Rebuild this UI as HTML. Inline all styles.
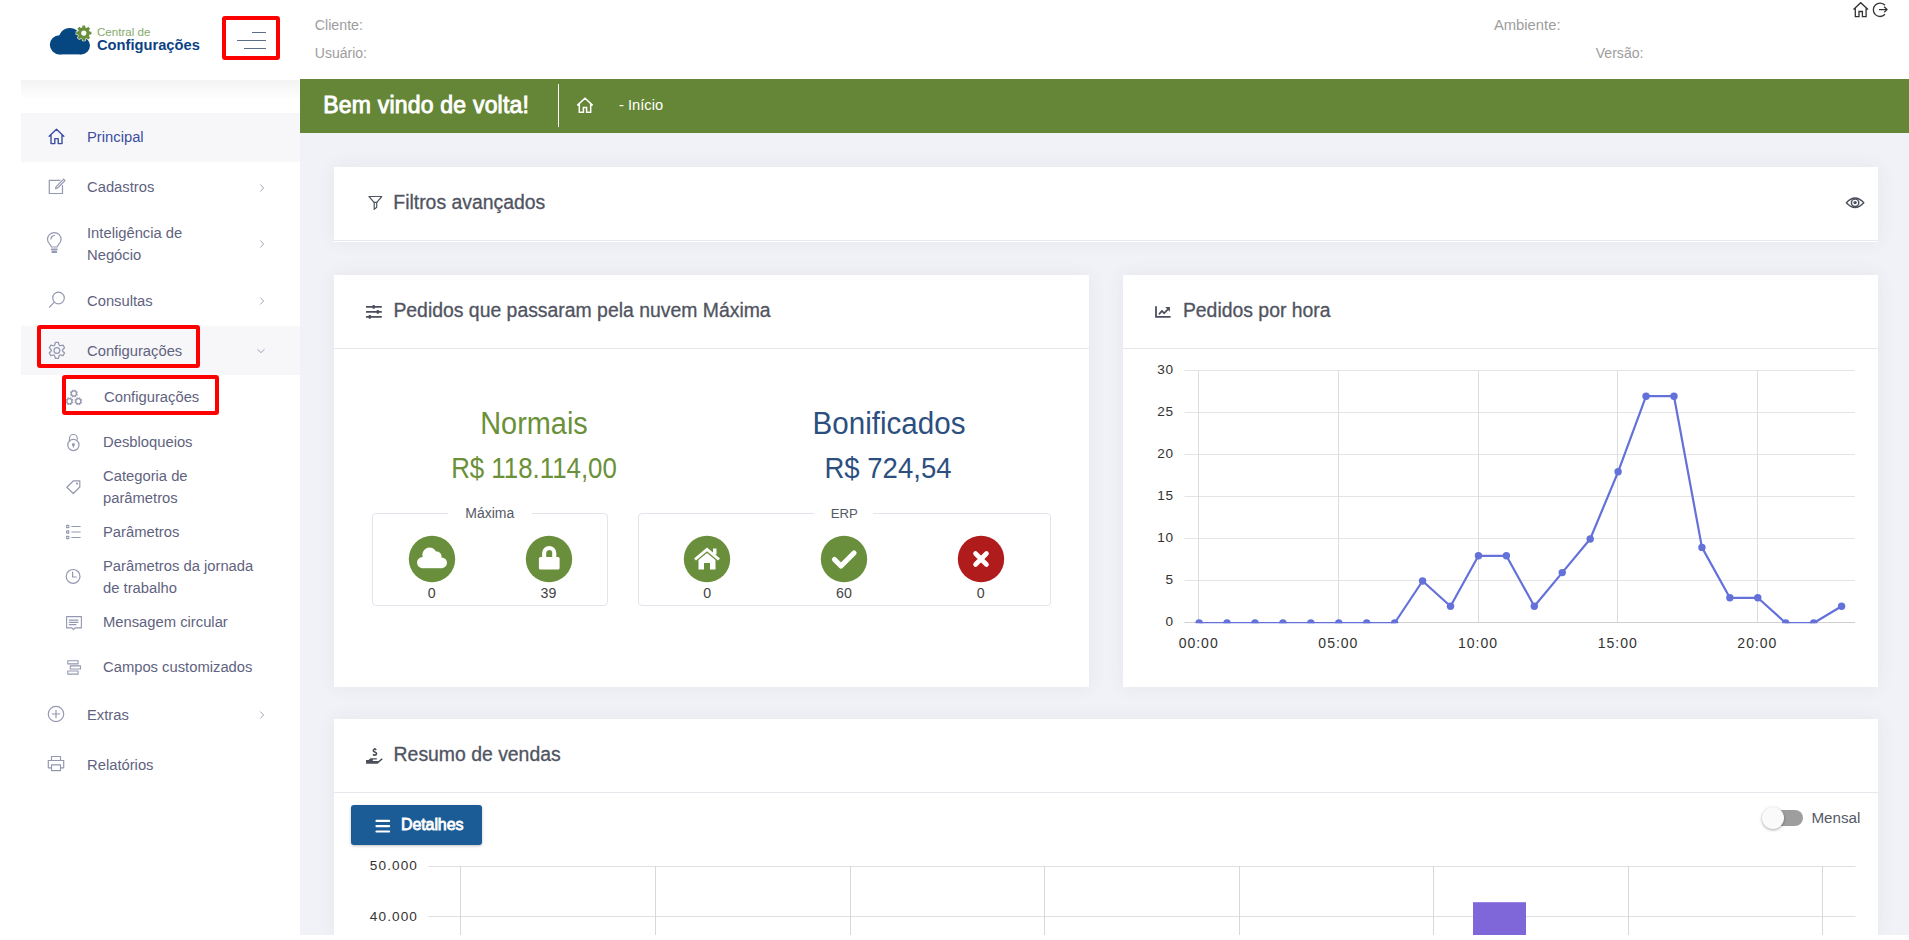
<!DOCTYPE html><html><head><meta charset="utf-8"><style>
*{margin:0;padding:0;box-sizing:border-box}
html,body{width:1909px;height:940px;overflow:hidden;background:#fff;font-family:"Liberation Sans",sans-serif}
.t{position:absolute;white-space:nowrap}
.abs{position:absolute}
.card{position:absolute;background:#fff;box-shadow:0 0 18px rgba(60,64,100,0.07)}
.hb{position:absolute;left:0;right:0;height:1px;background:#e6e8ee}
svg{position:absolute;overflow:visible}
</style></head><body>
<div class="abs" style="left:300px;top:79px;width:1609px;height:856px;background:#f1f2f7"></div>
<div class="abs" style="left:21px;top:80px;width:279px;height:20px;background:linear-gradient(#f3f3f4,#fff)"></div>
<div class="abs" style="left:21px;top:113px;width:279px;height:49px;background:#f7f7fa"></div>
<div class="abs" style="left:21px;top:326px;width:279px;height:49px;background:#f7f7fa"></div>
<div class="t" style="top:17.88px;font-size:14.2px;line-height:14.2px;color:#9d9d9d;left:314.80px;">Cliente:</div>
<div class="t" style="top:46.05px;font-size:14.0px;line-height:14.0px;color:#9d9d9d;left:314.80px;">Usuário:</div>
<div class="t" style="top:18.07px;font-size:14.8px;line-height:14.8px;color:#9d9d9d;left:1493.90px;">Ambiente:</div>
<div class="t" style="top:46.06px;font-size:14.1px;line-height:14.1px;color:#9d9d9d;left:1595.70px;">Versão:</div>
<svg style="left:0;top:0" width="210" height="70" viewBox="0 0 210 70">
<g fill="#064781"><circle cx="59.4" cy="44.8" r="9.6"/><circle cx="69.8" cy="38.8" r="10.9"/><circle cx="81.2" cy="45.6" r="8.8"/><rect x="59.4" y="40" width="21.8" height="14.4"/></g>
<path d="M82.28,27.40 L82.50,25.51 L85.10,25.51 L85.32,27.40 L86.76,28.00 L88.25,26.81 L90.09,28.65 L88.90,30.14 L89.50,31.58 L91.39,31.80 L91.39,34.40 L89.50,34.62 L88.90,36.06 L90.09,37.55 L88.25,39.39 L86.76,38.20 L85.32,38.80 L85.10,40.69 L82.50,40.69 L82.28,38.80 L80.84,38.20 L79.35,39.39 L77.51,37.55 L78.70,36.06 L78.10,34.62 L76.21,34.40 L76.21,31.80 L78.10,31.58 L78.70,30.14 L77.51,28.65 L79.35,26.81 L80.84,28.00 Z" fill="#6a8f3b" stroke="#fff" stroke-width="1.1" paint-order="stroke" stroke-linejoin="round"/>
<circle cx="83.8" cy="33.1" r="2.6" fill="#fff"/>
</svg>
<div class="t" style="top:26.08px;font-size:11.6px;line-height:11.6px;color:#86a96a;left:97.00px;">Central de</div>
<div class="t" style="top:38.16px;font-size:14.7px;line-height:14.7px;color:#0c4283;font-weight:700;left:97.00px;">Configurações</div>
<div class="abs" style="left:221.5px;top:15.5px;width:58px;height:44px;border:4px solid #ff0000;border-radius:3px"></div>
<div class="abs" style="left:252px;top:31.7px;width:14px;height:1.5px;background:#5a6e88"></div>
<div class="abs" style="left:237px;top:39.7px;width:29px;height:1.5px;background:#5a6e88"></div>
<div class="abs" style="left:244px;top:47.7px;width:22px;height:1.5px;background:#5a6e88"></div>
<svg style="left:1850px;top:0" width="45" height="22" viewBox="0 0 45 22">
<path d="M3.5,9.5 L10.7,2.7 L18,9.5 M5.3,8 V16.6 H9 V11.5 H12.4 V16.6 H16.1 V8" fill="none" stroke="#333" stroke-width="1.3" stroke-linejoin="miter"/>
<path d="M35,5.3 A6.7,6.7 0 1 0 35,14.3" fill="none" stroke="#333" stroke-width="1.3"/>
<path d="M29,9.6 H37 M34.2,6.8 L37,9.6 L34.2,12.4" fill="none" stroke="#333" stroke-width="1.3"/>
</svg>
<div class="abs" style="left:300px;top:79px;width:1609px;height:54px;background:#658636"></div>
<div class="t" style="top:93.83px;font-size:23px;line-height:23px;color:#fff;letter-spacing:0.2px;left:323.30px;-webkit-text-stroke:0.9px #fff;">Bem vindo de volta!</div>
<div class="abs" style="left:558px;top:84px;width:1px;height:43px;background:#fff"></div>
<svg style="left:575px;top:96px" width="20" height="20" viewBox="0 0 20 20">
<path d="M2.3,9.4 L10,2.3 L17.7,9.4 M4.3,7.8 V16.3 H8.4 V11.6 H11.6 V16.3 H15.7 V7.8" fill="none" stroke="#fff" stroke-width="1.5" stroke-linejoin="miter"/>
</svg>
<div class="t" style="top:98.16px;font-size:14.7px;line-height:14.7px;color:#fff;left:619.00px;">- Início</div>
<div class="t" style="top:129.18px;font-size:15.5px;line-height:15.5px;color:#3c4d9f;left:87.00px;transform:scaleX(0.953);transform-origin:left 50%;">Principal</div>
<div class="t" style="top:179.08px;font-size:15.5px;line-height:15.5px;color:#5f6380;left:87.00px;transform:scaleX(0.953);transform-origin:left 50%;">Cadastros</div>
<div class="t" style="top:225.18px;font-size:15.5px;line-height:15.5px;color:#5f6380;left:87.00px;transform:scaleX(0.953);transform-origin:left 50%;">Inteligência de</div>
<div class="t" style="top:246.88px;font-size:15.5px;line-height:15.5px;color:#5f6380;left:87.00px;transform:scaleX(0.953);transform-origin:left 50%;">Negócio</div>
<div class="t" style="top:292.78px;font-size:15.5px;line-height:15.5px;color:#5f6380;left:87.00px;transform:scaleX(0.953);transform-origin:left 50%;">Consultas</div>
<div class="t" style="top:342.58px;font-size:15.5px;line-height:15.5px;color:#5f6380;left:87.00px;transform:scaleX(0.953);transform-origin:left 50%;">Configurações</div>
<div class="t" style="top:388.58px;font-size:15.5px;line-height:15.5px;color:#5f6380;left:103.50px;transform:scaleX(0.953);transform-origin:left 50%;">Configurações</div>
<div class="t" style="top:434.08px;font-size:15.5px;line-height:15.5px;color:#5f6380;left:103.20px;transform:scaleX(0.953);transform-origin:left 50%;">Desbloqueios</div>
<div class="t" style="top:468.48px;font-size:15.5px;line-height:15.5px;color:#5f6380;left:103.20px;transform:scaleX(0.953);transform-origin:left 50%;">Categoria de</div>
<div class="t" style="top:489.58px;font-size:15.5px;line-height:15.5px;color:#5f6380;left:103.20px;transform:scaleX(0.953);transform-origin:left 50%;">parâmetros</div>
<div class="t" style="top:524.08px;font-size:15.5px;line-height:15.5px;color:#5f6380;left:103.20px;transform:scaleX(0.953);transform-origin:left 50%;">Parâmetros</div>
<div class="t" style="top:558.18px;font-size:15.5px;line-height:15.5px;color:#5f6380;left:103.20px;transform:scaleX(0.953);transform-origin:left 50%;">Parâmetros da jornada</div>
<div class="t" style="top:579.68px;font-size:15.5px;line-height:15.5px;color:#5f6380;left:103.20px;transform:scaleX(0.953);transform-origin:left 50%;">de trabalho</div>
<div class="t" style="top:613.58px;font-size:15.5px;line-height:15.5px;color:#5f6380;left:103.20px;transform:scaleX(0.953);transform-origin:left 50%;">Mensagem circular</div>
<div class="t" style="top:658.68px;font-size:15.5px;line-height:15.5px;color:#5f6380;left:103.20px;transform:scaleX(0.953);transform-origin:left 50%;">Campos customizados</div>
<div class="t" style="top:706.58px;font-size:15.5px;line-height:15.5px;color:#5f6380;left:87.00px;transform:scaleX(0.953);transform-origin:left 50%;">Extras</div>
<div class="t" style="top:756.68px;font-size:15.5px;line-height:15.5px;color:#5f6380;left:87.00px;transform:scaleX(0.953);transform-origin:left 50%;">Relatórios</div>
<svg style="left:258px;top:182.5px" width="8" height="10" viewBox="0 0 8 10"><path d="M2.3,1.5 L5.6,5 L2.3,8.5" fill="none" stroke="#a0a4b8" stroke-width="1"/></svg>
<svg style="left:258px;top:239px" width="8" height="10" viewBox="0 0 8 10"><path d="M2.3,1.5 L5.6,5 L2.3,8.5" fill="none" stroke="#a0a4b8" stroke-width="1"/></svg>
<svg style="left:258px;top:296px" width="8" height="10" viewBox="0 0 8 10"><path d="M2.3,1.5 L5.6,5 L2.3,8.5" fill="none" stroke="#a0a4b8" stroke-width="1"/></svg>
<svg style="left:258px;top:710px" width="8" height="10" viewBox="0 0 8 10"><path d="M2.3,1.5 L5.6,5 L2.3,8.5" fill="none" stroke="#a0a4b8" stroke-width="1"/></svg>
<svg style="left:256px;top:346px" width="10" height="10" viewBox="0 0 10 10"><path d="M1.5,3.3 L5,6.6 L8.5,3.3" fill="none" stroke="#a0a4b8" stroke-width="1"/></svg>
<svg style="left:48px;top:128px" width="18" height="17" viewBox="0 0 18 17"><g fill="none" stroke="#3c4d9f" stroke-width="1.4" stroke-linecap="round" stroke-linejoin="round"><path d="M1.2,8.2 L8.5,1.2 L15.8,8.2 M3,6.8 V15.6 H6.8 V10.6 H10.2 V15.6 H14 V6.8"/></g></svg>
<svg style="left:48px;top:178px" width="18" height="17" viewBox="0 0 18 17"><g fill="none" stroke="#9498b0" stroke-width="1.2" stroke-linecap="round" stroke-linejoin="round"><path d="M12,2.3 H1.3 V15.5 H14.5 V7.5"/><path d="M15.6,1.2 L8.2,8.6 L7.5,10.7 L9.6,10 L17,2.6 Z"/></g></svg>
<svg style="left:46px;top:232px" width="18" height="23" viewBox="0 0 18 23"><g fill="none" stroke="#9498b0" stroke-width="1.2" stroke-linecap="round" stroke-linejoin="round"><path d="M5.5,15 C4.8,12.5 1.5,11 1.5,7.5 A6.8,6.8 0 0 1 15.1,7.5 C15.1,11 11.8,12.5 11.1,15 Z"/><path d="M5.8,17.5 H10.8 M6.3,20 H10.3" stroke-width="1.8"/><path d="M5,7 A3.5,3.5 0 0 1 8.5,3.5"/></g></svg>
<svg style="left:48px;top:291px" width="18" height="18" viewBox="0 0 18 18"><g fill="none" stroke="#9498b0" stroke-width="1.2" stroke-linecap="round" stroke-linejoin="round"><circle cx="10.5" cy="7" r="5.8"/><path d="M6.4,11.2 L1.5,16.2"/></g></svg>
<svg style="left:44px;top:338px" width="26" height="24" viewBox="0 0 26 24"><g fill="none" stroke="#9498b0" stroke-width="1.25" stroke-linecap="round" stroke-linejoin="round"><path d="M10.88,6.54 L11.35,4.45 L14.45,4.45 L14.92,6.54 L15.65,7.64 L16.97,7.72 L19.01,7.09 L20.56,9.76 L18.99,11.22 L18.40,12.40 L18.99,13.58 L20.56,15.04 L19.01,17.71 L16.97,17.08 L15.65,17.16 L14.92,18.26 L14.45,20.35 L11.35,20.35 L10.88,18.26 L10.15,17.16 L8.83,17.08 L6.79,17.71 L5.24,15.04 L6.81,13.58 L7.40,12.40 L6.81,11.22 L5.24,9.76 L6.79,7.09 L8.83,7.72 L10.15,7.64 Z"/><circle cx="12.9" cy="12.4" r="2.9"/></g></svg>
<svg style="left:62px;top:386px" width="24" height="24" viewBox="0 0 24 24"><g fill="none" stroke="#9498b0" stroke-width="1.2" stroke-linecap="round" stroke-linejoin="round"><circle cx="11.9" cy="7.5" r="2.55" stroke-width="1.25"/><path d="M14.67,8.65 L15.55,9.01" stroke-width="1.5" stroke-linecap="butt"/><path d="M13.05,10.27 L13.41,11.15" stroke-width="1.5" stroke-linecap="butt"/><path d="M10.75,10.27 L10.39,11.15" stroke-width="1.5" stroke-linecap="butt"/><path d="M9.13,8.65 L8.25,9.01" stroke-width="1.5" stroke-linecap="butt"/><path d="M9.13,6.35 L8.25,5.99" stroke-width="1.5" stroke-linecap="butt"/><path d="M10.75,4.73 L10.39,3.85" stroke-width="1.5" stroke-linecap="butt"/><path d="M13.05,4.73 L13.41,3.85" stroke-width="1.5" stroke-linecap="butt"/><path d="M14.67,6.35 L15.55,5.99" stroke-width="1.5" stroke-linecap="butt"/><circle cx="7.4" cy="15.2" r="2.55" stroke-width="1.25"/><path d="M10.17,16.35 L11.05,16.71" stroke-width="1.5" stroke-linecap="butt"/><path d="M8.55,17.97 L8.91,18.85" stroke-width="1.5" stroke-linecap="butt"/><path d="M6.25,17.97 L5.89,18.85" stroke-width="1.5" stroke-linecap="butt"/><path d="M4.63,16.35 L3.75,16.71" stroke-width="1.5" stroke-linecap="butt"/><path d="M4.63,14.05 L3.75,13.69" stroke-width="1.5" stroke-linecap="butt"/><path d="M6.25,12.43 L5.89,11.55" stroke-width="1.5" stroke-linecap="butt"/><path d="M8.55,12.43 L8.91,11.55" stroke-width="1.5" stroke-linecap="butt"/><path d="M10.17,14.05 L11.05,13.69" stroke-width="1.5" stroke-linecap="butt"/><circle cx="16.3" cy="15.2" r="2.55" stroke-width="1.25"/><path d="M19.07,16.35 L19.95,16.71" stroke-width="1.5" stroke-linecap="butt"/><path d="M17.45,17.97 L17.81,18.85" stroke-width="1.5" stroke-linecap="butt"/><path d="M15.15,17.97 L14.79,18.85" stroke-width="1.5" stroke-linecap="butt"/><path d="M13.53,16.35 L12.65,16.71" stroke-width="1.5" stroke-linecap="butt"/><path d="M13.53,14.05 L12.65,13.69" stroke-width="1.5" stroke-linecap="butt"/><path d="M15.15,12.43 L14.79,11.55" stroke-width="1.5" stroke-linecap="butt"/><path d="M17.45,12.43 L17.81,11.55" stroke-width="1.5" stroke-linecap="butt"/><path d="M19.07,14.05 L19.95,13.69" stroke-width="1.5" stroke-linecap="butt"/></g></svg>
<svg style="left:66px;top:433px" width="16" height="19" viewBox="0 0 16 19"><g fill="none" stroke="#9498b0" stroke-width="1.2" stroke-linecap="round" stroke-linejoin="round"><circle cx="7.4" cy="12" r="5.6"/><path d="M3.5,8 V5.4 A3.9,3.9 0 0 1 11.3,5.4 V6.2"/><circle cx="7.4" cy="11.6" r="0.9" fill="#9498b0"/><path d="M7.4,12 V13.9" stroke-width="1.3"/></g></svg>
<svg style="left:65px;top:478px" width="17" height="17" viewBox="0 0 17 17"><g fill="none" stroke="#9498b0" stroke-width="1.2" stroke-linecap="round" stroke-linejoin="round"><path d="M1.8,9.3 L8.5,2.8 H14.8 V9 L8.3,15.5 Z"/><circle cx="12" cy="5.6" r="0.5"/></g></svg>
<svg style="left:65px;top:524px" width="17" height="16" viewBox="0 0 17 16"><g fill="none" stroke="#9498b0" stroke-width="1.1" stroke-linecap="round" stroke-linejoin="round"><rect x="1.6" y="1.4" width="2.2" height="2.2" rx="0.2"/><rect x="1.6" y="6.9" width="2.2" height="2.2" rx="0.2"/><rect x="1.6" y="12.4" width="2.2" height="2.2" rx="0.2"/><path d="M6.8,2.5 H15.2 M6.8,8 H15.2 M6.8,13.5 H15.2"/></g></svg>
<svg style="left:65px;top:568px" width="17" height="17" viewBox="0 0 17 17"><g fill="none" stroke="#9498b0" stroke-width="1.2" stroke-linecap="round" stroke-linejoin="round"><circle cx="8.1" cy="8.4" r="6.9"/><path d="M7.6,4.2 V9 H11.2"/></g></svg>
<svg style="left:65px;top:615px" width="18" height="17" viewBox="0 0 18 17"><g fill="none" stroke="#9498b0" stroke-width="1.1" stroke-linecap="round" stroke-linejoin="round"><path d="M1.6,1.6 H16.4 V12.9 H10 L8.5,14.6 L7,12.9 H1.6 Z"/><path d="M4.3,5.1 H13 M4.3,7.3 H13 M4.3,9.6 H11" stroke-width="1.3"/></g></svg>
<svg style="left:66px;top:659px" width="17" height="17" viewBox="0 0 17 17"><g fill="none" stroke="#9498b0" stroke-width="1.1" stroke-linecap="round" stroke-linejoin="round"><rect x="1.8" y="1.8" width="10.3" height="3.1"/><rect x="4.3" y="6.9" width="10.2" height="3.1"/><rect x="1.8" y="12" width="10.3" height="3.1"/></g></svg>
<svg style="left:47px;top:705px" width="18" height="18" viewBox="0 0 18 18"><g fill="none" stroke="#9498b0" stroke-width="1.2" stroke-linecap="round" stroke-linejoin="round"><circle cx="9" cy="9" r="7.7"/><path d="M9,5.3 V12.7 M5.3,9 H12.7"/></g></svg>
<svg style="left:47px;top:755px" width="18" height="17" viewBox="0 0 18 17"><g fill="none" stroke="#9498b0" stroke-width="1.2" stroke-linecap="round" stroke-linejoin="round"><path d="M4.5,5.5 V1.5 H13.5 V5.5"/><path d="M4.5,12.8 H1.3 V5.5 H16.7 V12.8 H13.5"/><rect x="4.5" y="9.8" width="9" height="5.8"/></g></svg>
<div class="abs" style="left:36.5px;top:324.5px;width:163px;height:43px;border:4px solid #ff0000;border-radius:3px"></div>
<div class="abs" style="left:61.5px;top:374.5px;width:157px;height:40px;border:4px solid #ff0000;border-radius:3px"></div>
<div class="card" style="left:334px;top:167px;width:1544px;height:75px"><div class="hb" style="top:73px"></div></div>
<svg style="left:367px;top:194px" width="16" height="17" viewBox="0 0 16 17"><g fill="none" stroke="#50545f" stroke-width="1.2" stroke-linecap="round" stroke-linejoin="round"><path d="M2,2.5 H14.8 L9.8,8.4 H7 Z"/><path d="M7.2,8.4 V15.4 L9.7,13.3 V8.4"/></g></svg>
<div class="t" style="top:192.58px;font-size:19.4px;line-height:19.4px;color:#50545f;left:393.30px;-webkit-text-stroke:0.3px #50545f;">Filtros avançados</div>
<svg style="left:1845px;top:196px" width="20" height="14" viewBox="0 0 20 14">
<path d="M1.4,6.8 Q10,-2.8 18.8,6.8 Q10,16.4 1.4,6.8 Z" fill="none" stroke="#4b4f5b" stroke-width="1.4" stroke-linejoin="round"/><circle cx="10.1" cy="6.8" r="3.7" fill="none" stroke="#4b4f5b" stroke-width="1.5"/><circle cx="10.1" cy="6.6" r="1.7" fill="#4b4f5b"/></svg>
<div class="card" style="left:334px;top:275px;width:755px;height:412px"><div class="hb" style="top:73px"></div></div>
<svg style="left:364px;top:304px" width="20" height="16" viewBox="0 0 20 16"><path d="M2,2.9 H17.8 M2,7.9 H17.8 M2,12.9 H17.8" stroke="#4b4f5b" stroke-width="1.8"/><rect x="8.4" y="1.1" width="2.6" height="3.6" rx="1" fill="#4b4f5b"/><rect x="12.5" y="6.1" width="2.6" height="3.6" rx="1" fill="#4b4f5b"/><rect x="4.5" y="11.1" width="2.6" height="3.6" rx="1" fill="#4b4f5b"/></svg>
<div class="t" style="top:300.88px;font-size:19.4px;line-height:19.4px;color:#50545f;left:393.40px;-webkit-text-stroke:0.3px #50545f;">Pedidos que passaram pela nuvem Máxima</div>
<div class="t" style="top:407.86px;font-size:31px;line-height:31px;color:#6a9039;left:234.30px;width:600px;text-align:center;transform:scaleX(0.932);transform-origin:center 50%;">Normais</div>
<div class="t" style="top:453.03px;font-size:29.5px;line-height:29.5px;color:#6a9039;left:234.00px;width:600px;text-align:center;transform:scaleX(0.876);transform-origin:center 50%;">R$ 118.114,00</div>
<div class="t" style="top:407.66px;font-size:31px;line-height:31px;color:#2c4f80;left:588.50px;width:600px;text-align:center;transform:scaleX(0.954);transform-origin:center 50%;">Bonificados</div>
<div class="t" style="top:453.03px;font-size:29.5px;line-height:29.5px;color:#2c4f80;left:588.20px;width:600px;text-align:center;transform:scaleX(0.933);transform-origin:center 50%;">R$ 724,54</div>
<div class="abs" style="left:372px;top:513px;width:236px;height:93px;border:1px solid #e3e5ec;border-radius:4px"></div>
<div class="abs" style="left:448px;top:510px;width:84px;height:6px;background:#fff"></div>
<div class="t" style="top:506.45px;font-size:14px;line-height:14px;color:#555a66;left:189.80px;width:600px;text-align:center;">Máxima</div>
<div class="abs" style="left:638px;top:513px;width:413px;height:93px;border:1px solid #e3e5ec;border-radius:4px"></div>
<div class="abs" style="left:814px;top:510px;width:59px;height:6px;background:#fff"></div>
<div class="t" style="top:506.83px;font-size:13.2px;line-height:13.2px;color:#555a66;left:544.20px;width:600px;text-align:center;">ERP</div>
<svg style="left:407.9px;top:535.3px" width="48" height="48" viewBox="0 0 48 48"><circle cx="24" cy="24" r="23.2" fill="#6a8f3c"/><g transform="translate(1,1)"><g fill="#fff"><circle cx="13.6" cy="26.6" r="5.6"/><circle cx="20.6" cy="18.8" r="7.3"/><circle cx="27.6" cy="20.6" r="5"/><circle cx="32.6" cy="26.8" r="5.4"/><rect x="13.6" y="22" width="19" height="10.2"/></g></g></svg>
<svg style="left:524.5px;top:535.3px" width="48" height="48" viewBox="0 0 48 48"><circle cx="24" cy="24" r="23.2" fill="#6a8f3c"/><g transform="translate(1,1)"><rect x="12.9" y="20.9" width="20.7" height="12.7" rx="1.6" fill="#fff"/><path d="M18.15,21.5 V17.1 A5.05,5.05 0 0 1 28.25,17.1 V21.5" fill="none" stroke="#fff" stroke-width="4.1"/></g></svg>
<svg style="left:683.1px;top:535.4px" width="48" height="48" viewBox="0 0 48 48"><circle cx="24" cy="24" r="23.2" fill="#6a8f3c"/><g transform="translate(1,1)"><path d="M23,11.5 L10,22.5 L12,24.5 L23,15.2 L34,24.5 L36,22.5 Z" fill="#fff"/><path d="M14.5,24 L23,17 L31.5,24 V33.5 H26 V27 H20 V33.5 H14.5 Z" fill="#fff"/><rect x="29" y="12.5" width="3.5" height="6" fill="#fff"/></g></svg>
<svg style="left:820px;top:535.4px" width="48" height="48" viewBox="0 0 48 48"><circle cx="24" cy="24" r="23.2" fill="#6a8f3c"/><g transform="translate(1,1)"><path d="M13.5,23.5 L20,30 L33,17" fill="none" stroke="#fff" stroke-width="5.2" stroke-linecap="round" stroke-linejoin="round"/></g></svg>
<svg style="left:956.8px;top:535.4px" width="48" height="48" viewBox="0 0 48 48"><circle cx="24" cy="24" r="23.2" fill="#b01b1b"/><g transform="translate(1,1)"><path d="M17.5,17.5 L28.5,28.5 M28.5,17.5 L17.5,28.5" fill="none" stroke="#fff" stroke-width="4.6" stroke-linecap="round"/></g></svg>
<div class="t" style="top:585.98px;font-size:14.2px;line-height:14.2px;color:#444;left:131.70px;width:600px;text-align:center;">0</div>
<div class="t" style="top:585.98px;font-size:14.2px;line-height:14.2px;color:#444;left:248.40px;width:600px;text-align:center;">39</div>
<div class="t" style="top:585.98px;font-size:14.2px;line-height:14.2px;color:#444;left:407.10px;width:600px;text-align:center;">0</div>
<div class="t" style="top:585.98px;font-size:14.2px;line-height:14.2px;color:#444;left:544.00px;width:600px;text-align:center;">60</div>
<div class="t" style="top:585.98px;font-size:14.2px;line-height:14.2px;color:#444;left:680.80px;width:600px;text-align:center;">0</div>
<div class="card" style="left:1123px;top:275px;width:755px;height:412px"><div class="hb" style="top:73px"></div></div>
<svg style="left:1154px;top:305px" width="20" height="16" viewBox="0 0 20 16"><path d="M2,1.2 V11.9 H16.6" fill="none" stroke="#4b4f5b" stroke-width="1.8"/><path d="M4.9,9.4 L8,5.9 L10,8.3 L14.6,3.6" fill="none" stroke="#4b4f5b" stroke-width="1.7" stroke-linejoin="round"/><path d="M11.2,2.1 H15.9 V6.8 Z" fill="#4b4f5b"/></svg>
<div class="t" style="top:300.58px;font-size:19.4px;line-height:19.4px;color:#50545f;left:1182.90px;-webkit-text-stroke:0.3px #50545f;">Pedidos por hora</div>
<svg style="left:0;top:0" width="1909" height="940" viewBox="0 0 1909 940"><line x1="1184.5" y1="622.5" x2="1855" y2="622.5" stroke="#d0d0d0" stroke-width="1"/><line x1="1184.5" y1="580.5" x2="1855" y2="580.5" stroke="#e4e4e4" stroke-width="1"/><line x1="1184.5" y1="538.5" x2="1855" y2="538.5" stroke="#e4e4e4" stroke-width="1"/><line x1="1184.5" y1="496.5" x2="1855" y2="496.5" stroke="#e4e4e4" stroke-width="1"/><line x1="1184.5" y1="454.5" x2="1855" y2="454.5" stroke="#e4e4e4" stroke-width="1"/><line x1="1184.5" y1="412.5" x2="1855" y2="412.5" stroke="#e4e4e4" stroke-width="1"/><line x1="1184.5" y1="370.5" x2="1855" y2="370.5" stroke="#e4e4e4" stroke-width="1"/><line x1="1198.5" y1="370.5" x2="1198.5" y2="622.0" stroke="#dcdcdc" stroke-width="1"/><line x1="1338.5" y1="370.5" x2="1338.5" y2="622.0" stroke="#dcdcdc" stroke-width="1"/><line x1="1478.5" y1="370.5" x2="1478.5" y2="622.0" stroke="#dcdcdc" stroke-width="1"/><line x1="1617.5" y1="370.5" x2="1617.5" y2="622.0" stroke="#dcdcdc" stroke-width="1"/><line x1="1757.5" y1="370.5" x2="1757.5" y2="622.0" stroke="#dcdcdc" stroke-width="1"/><clipPath id="cc"><rect x="1180" y="360" width="680" height="263.3"/></clipPath><g clip-path="url(#cc)"><polyline points="1199.10,623.00 1227.03,623.00 1254.97,623.00 1282.90,623.00 1310.84,623.00 1338.77,623.00 1366.71,623.00 1394.64,623.00 1422.58,581.00 1450.51,606.20 1478.45,555.80 1506.38,555.80 1534.32,606.20 1562.25,572.60 1590.19,539.00 1618.12,471.80 1646.06,396.20 1673.99,396.20 1701.93,547.40 1729.86,597.80 1757.80,597.80 1785.73,623.00 1813.67,623.00 1841.61,606.20" fill="none" stroke="#6371d9" stroke-width="2.2" stroke-linejoin="round"/><circle cx="1199.10" cy="623.00" r="3.7" fill="#6371d9"/><circle cx="1227.03" cy="623.00" r="3.7" fill="#6371d9"/><circle cx="1254.97" cy="623.00" r="3.7" fill="#6371d9"/><circle cx="1282.90" cy="623.00" r="3.7" fill="#6371d9"/><circle cx="1310.84" cy="623.00" r="3.7" fill="#6371d9"/><circle cx="1338.77" cy="623.00" r="3.7" fill="#6371d9"/><circle cx="1366.71" cy="623.00" r="3.7" fill="#6371d9"/><circle cx="1394.64" cy="623.00" r="3.7" fill="#6371d9"/><circle cx="1422.58" cy="581.00" r="3.7" fill="#6371d9"/><circle cx="1450.51" cy="606.20" r="3.7" fill="#6371d9"/><circle cx="1478.45" cy="555.80" r="3.7" fill="#6371d9"/><circle cx="1506.38" cy="555.80" r="3.7" fill="#6371d9"/><circle cx="1534.32" cy="606.20" r="3.7" fill="#6371d9"/><circle cx="1562.25" cy="572.60" r="3.7" fill="#6371d9"/><circle cx="1590.19" cy="539.00" r="3.7" fill="#6371d9"/><circle cx="1618.12" cy="471.80" r="3.7" fill="#6371d9"/><circle cx="1646.06" cy="396.20" r="3.7" fill="#6371d9"/><circle cx="1673.99" cy="396.20" r="3.7" fill="#6371d9"/><circle cx="1701.93" cy="547.40" r="3.7" fill="#6371d9"/><circle cx="1729.86" cy="597.80" r="3.7" fill="#6371d9"/><circle cx="1757.80" cy="597.80" r="3.7" fill="#6371d9"/><circle cx="1785.73" cy="623.00" r="3.7" fill="#6371d9"/><circle cx="1813.67" cy="623.00" r="3.7" fill="#6371d9"/><circle cx="1841.61" cy="606.20" r="3.7" fill="#6371d9"/></g></svg>
<div class="t" style="top:615.49px;font-size:13.6px;line-height:13.6px;color:#333;letter-spacing:0.6px;left:873.60px;width:300px;text-align:right;">0</div>
<div class="t" style="top:573.49px;font-size:13.6px;line-height:13.6px;color:#333;letter-spacing:0.6px;left:873.60px;width:300px;text-align:right;">5</div>
<div class="t" style="top:531.49px;font-size:13.6px;line-height:13.6px;color:#333;letter-spacing:0.6px;left:873.60px;width:300px;text-align:right;">10</div>
<div class="t" style="top:489.49px;font-size:13.6px;line-height:13.6px;color:#333;letter-spacing:0.6px;left:873.60px;width:300px;text-align:right;">15</div>
<div class="t" style="top:447.49px;font-size:13.6px;line-height:13.6px;color:#333;letter-spacing:0.6px;left:873.60px;width:300px;text-align:right;">20</div>
<div class="t" style="top:405.49px;font-size:13.6px;line-height:13.6px;color:#333;letter-spacing:0.6px;left:873.60px;width:300px;text-align:right;">25</div>
<div class="t" style="top:363.49px;font-size:13.6px;line-height:13.6px;color:#333;letter-spacing:0.6px;left:873.60px;width:300px;text-align:right;">30</div>
<div class="t" style="top:636.45px;font-size:14px;line-height:14px;color:#333;letter-spacing:1.0px;left:898.70px;width:600px;text-align:center;">00:00</div>
<div class="t" style="top:636.45px;font-size:14px;line-height:14px;color:#333;letter-spacing:1.0px;left:1038.38px;width:600px;text-align:center;">05:00</div>
<div class="t" style="top:636.45px;font-size:14px;line-height:14px;color:#333;letter-spacing:1.0px;left:1178.05px;width:600px;text-align:center;">10:00</div>
<div class="t" style="top:636.45px;font-size:14px;line-height:14px;color:#333;letter-spacing:1.0px;left:1317.72px;width:600px;text-align:center;">15:00</div>
<div class="t" style="top:636.45px;font-size:14px;line-height:14px;color:#333;letter-spacing:1.0px;left:1457.40px;width:600px;text-align:center;">20:00</div>
<div class="card" style="left:334px;top:719px;width:1544px;height:216px"><div class="hb" style="top:73px"></div></div>
<svg style="left:360px;top:740px" width="30" height="30" viewBox="0 0 30 30"><path d="M6.06,23.8 V20.1 H8.5 L10.5,18.2 H16.8 V19.6 H12.8 V21.1 H18.5 L21.7,18.2 L22.8,19.2 L17.6,23.8 Z" fill="#4b4f5b"/><path d="M376.3,749.9 C375.6,749 373.2,748.9 373.2,750.6 C373.2,752.2 376.6,751.9 376.6,753.8 C376.6,755.4 373.8,755.3 372.9,754.4 M374.85,748 V749.1 M374.85,755.1 V756" transform="translate(-360,-740)" fill="none" stroke="#4b4f5b" stroke-width="1.5"/></svg>
<div class="t" style="top:744.98px;font-size:19.4px;line-height:19.4px;color:#50545f;left:393.60px;-webkit-text-stroke:0.3px #50545f;">Resumo de vendas</div>
<div class="abs" style="left:351px;top:805px;width:130.5px;height:40px;background:#1b5b96;border-radius:3px;box-shadow:0 1px 3px rgba(0,0,0,0.25)"></div>
<svg style="left:374px;top:819px" width="18" height="14" viewBox="0 0 18 14"><path d="M2.5,1.9 H15.1 M2.5,7.2 H15.1 M2.5,12.5 H15.1" stroke="#fff" stroke-width="2.2" stroke-linecap="round"/></svg>
<div class="t" style="top:816.66px;font-size:16px;line-height:16px;color:#fff;letter-spacing:-0.1px;left:401.00px;-webkit-text-stroke:0.8px #fff;">Detalhes</div>
<div class="abs" style="left:1764.5px;top:810px;width:38px;height:16px;background:#9e9e9e;border-radius:8px"></div>
<div class="abs" style="left:1762px;top:807px;width:22px;height:22px;background:#fafafa;border-radius:50%;box-shadow:0 1px 3px rgba(0,0,0,0.35)"></div>
<div class="t" style="top:809.93px;font-size:15.2px;line-height:15.2px;color:#555a66;left:1811.40px;">Mensal</div>
<svg style="left:0;top:0" width="1909" height="940" viewBox="0 0 1909 940"><line x1="428.4" y1="866.5" x2="1855.5" y2="866.5" stroke="#e0e0e0" stroke-width="1"/><line x1="428.4" y1="916.5" x2="1855.5" y2="916.5" stroke="#e0e0e0" stroke-width="1"/><line x1="460.5" y1="866" x2="460.5" y2="935" stroke="#d8d8d8" stroke-width="1"/><line x1="655.5" y1="866" x2="655.5" y2="935" stroke="#d8d8d8" stroke-width="1"/><line x1="850.5" y1="866" x2="850.5" y2="935" stroke="#d8d8d8" stroke-width="1"/><line x1="1044.5" y1="866" x2="1044.5" y2="935" stroke="#d8d8d8" stroke-width="1"/><line x1="1239.5" y1="866" x2="1239.5" y2="935" stroke="#d8d8d8" stroke-width="1"/><line x1="1433.5" y1="866" x2="1433.5" y2="935" stroke="#d8d8d8" stroke-width="1"/><line x1="1628.5" y1="866" x2="1628.5" y2="935" stroke="#d8d8d8" stroke-width="1"/><line x1="1822.5" y1="866" x2="1822.5" y2="935" stroke="#d8d8d8" stroke-width="1"/><rect x="1473" y="902.2" width="53" height="33" fill="#7f67da"/></svg>
<div class="t" style="top:859.49px;font-size:13.6px;line-height:13.6px;color:#333;letter-spacing:1.1px;left:118.00px;width:300px;text-align:right;">50.000</div>
<div class="t" style="top:910.29px;font-size:13.6px;line-height:13.6px;color:#333;letter-spacing:1.1px;left:118.00px;width:300px;text-align:right;">40.000</div>
<div class="abs" style="left:0;top:935px;width:1909px;height:5px;background:#fff"></div>
</body></html>
